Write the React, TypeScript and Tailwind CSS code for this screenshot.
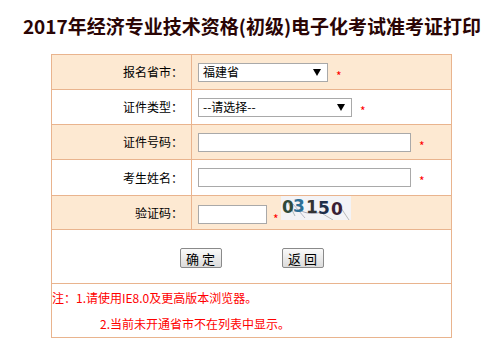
import React from 'react';

const cjk = "font-['SimSun','Noto_Sans_CJK_SC',sans-serif]";

function Star() {
  return <span className="ml-2 mt-[7px] text-[12px] leading-none text-[#ff0000]">*</span>;
}

function FakeSelect({ width, value }: { width: string; value: string }) {
  return (
    <div className={`relative flex h-[19px] items-center border border-[#a9a9a9] bg-white pl-1 text-[12px] text-black ${width}`}>
      {value}
      <span className="absolute right-[6px] top-[5px] h-0 w-0 border-x-[4px] border-t-[7px] border-x-transparent border-t-black" />
    </div>
  );
}

function Captcha() {
  return (
    <svg width="70" height="24" viewBox="0 0 70 24" className="self-start">
      <rect width="70" height="24" fill="#f3f3f6" />
      <path d="M6 4 L14 20" stroke="#9aa" strokeWidth="0.8" fill="none" />
      <path d="M12 8 L24 22" stroke="#aab" strokeWidth="0.8" fill="none" />
      <path d="M18 14 Q30 20 40 16" stroke="#99a" strokeWidth="0.8" fill="none" />
      <path d="M60 12 L68 24" stroke="#aaa" strokeWidth="0.8" fill="none" />
      <path d="M42 18 L52 24" stroke="#aaa" strokeWidth="0.8" fill="none" />
      <text x="1" y="17" fontFamily="'DejaVu Sans', sans-serif" fontWeight="bold" fontSize="17" fill="#2f4a3a">0</text>
      <text x="12" y="16" fontFamily="'DejaVu Sans', sans-serif" fontWeight="bold" fontSize="17" fill="#2c6f96">3</text>
      <text x="25" y="17" fontFamily="'DejaVu Sans', sans-serif" fontWeight="bold" fontSize="17" fill="#333333">1</text>
      <text x="37" y="18" fontFamily="'DejaVu Sans', sans-serif" fontWeight="bold" fontSize="17" fill="#1f2f4a">5</text>
      <text x="50" y="19" fontFamily="'DejaVu Sans', sans-serif" fontWeight="bold" fontSize="17" fill="#3a1f36">0</text>
    </svg>
  );
}

function Btn({ label }: { label: string }) {
  return (
    <button className="h-[20px] w-[42px] rounded-[2px] border border-[#8a8a8a] bg-gradient-to-b from-[#fafafa] to-[#dcdcdc] text-[13px] leading-none text-black">
      {label}
    </button>
  );
}

export default function App() {
  const label = 'pr-[8px] text-right text-[12px] text-black border border-[#e9b48e]';
  const cell = 'pl-[6px] border border-[#e9b48e]';
  return (
    <div className={`h-[360px] w-[504px] bg-white ${cjk}`}>
      <h1 className="pt-[14px] text-center text-[19px] font-bold leading-[24px] text-[#2a0505] font-['Microsoft_YaHei','Noto_Sans_CJK_SC',sans-serif]">
        2017年经济专业技术资格(初级)电子化考试准考证打印
      </h1>

      <table className="ml-[51px] mt-[16px] w-[401px] border-collapse">
        <tbody>
          <tr className="h-[35px] bg-[#fde9d2]">
            <td className={`w-[140px] ${label}`}>报名省市：</td>
            <td className={cell}>
              <div className="flex items-start">
                <FakeSelect width="w-[130px]" value="福建省" />
                <Star />
              </div>
            </td>
          </tr>
          <tr className="h-[35px] bg-white">
            <td className={label}>证件类型：</td>
            <td className={cell}>
              <div className="flex items-start">
                <FakeSelect width="w-[154px]" value="--请选择--" />
                <Star />
              </div>
            </td>
          </tr>
          <tr className="h-[35px] bg-[#fde9d2]">
            <td className={label}>证件号码：</td>
            <td className={cell}>
              <div className="flex items-start">
                <input className="h-[19px] w-[213px] border border-[#a9a9a9] bg-white outline-none" />
                <Star />
              </div>
            </td>
          </tr>
          <tr className="h-[36px] bg-white">
            <td className={label}>考生姓名：</td>
            <td className={cell}>
              <div className="flex items-start">
                <input className="h-[19px] w-[213px] border border-[#a9a9a9] bg-white outline-none" />
                <Star />
              </div>
            </td>
          </tr>
          <tr className="h-[34px] bg-[#fde9d2]">
            <td className={label}>验证码：</td>
            <td className={`${cell} align-top`}>
              <div className="flex items-start">
                <input className="mt-[9px] h-[19px] w-[69px] border border-[#a9a9a9] bg-white outline-none" />
                <span className="ml-[6px] mt-[17px] text-[12px] leading-none text-[#ff0000]">*</span>
                <div className="ml-[2px]">
                  <Captcha />
                </div>
              </div>
            </td>
          </tr>
          <tr className="h-[54px] bg-white">
            <td colSpan={2} className="border border-[#e9b48e] pt-[18px] align-top">
              <div className="flex justify-center gap-[60px]">
                <Btn label="确 定" />
                <Btn label="返 回" />
              </div>
            </td>
          </tr>
          <tr className="h-[54px] bg-white">
            <td colSpan={2} className="border border-[#e9b48e] align-top text-[12px] leading-[26px] text-[#ff0000]">
              <div className="pt-[1px]">注：1.请使用IE8.0及更高版本浏览器。</div>
              <div className="pl-[48px]">2.当前未开通省市不在列表中显示。</div>
            </td>
          </tr>
        </tbody>
      </table>
    </div>
  );
}
